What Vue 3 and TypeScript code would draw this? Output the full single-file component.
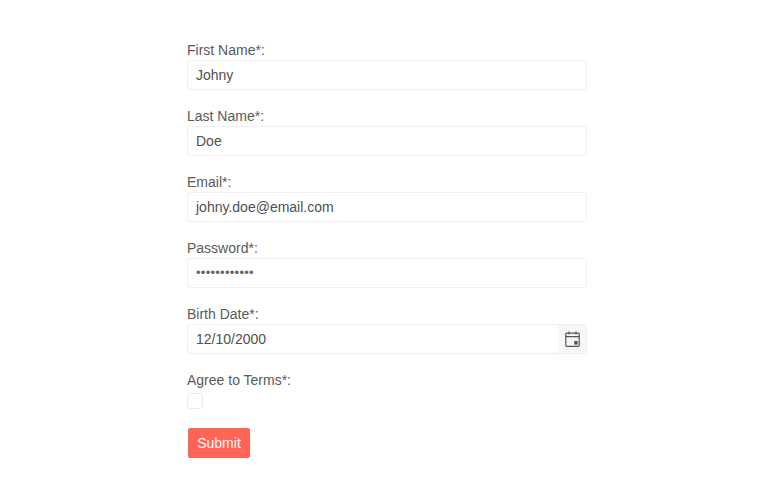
<script setup lang="ts">
const textFields = [
  { label: 'First Name*:', value: 'Johny' },
  { label: 'Last Name*:', value: 'Doe' },
  { label: 'Email*:', value: 'johny.doe@email.com' },
]
</script>

<template>
  <main class="page">
    <form class="form" @submit.prevent>
      <div v-for="f in textFields" :key="f.label" class="field">
        <label class="label">{{ f.label }}</label>
        <div class="input">{{ f.value }}</div>
      </div>
      <div class="field">
        <label class="label">Password*:</label>
        <div class="input dots">••••••••••••</div>
      </div>
      <div class="field">
        <label class="label">Birth Date*:</label>
        <div class="input date">
          <span>12/10/2000</span>
          <span class="cal">
            <svg width="15" height="16" viewBox="0 0 15 16" fill="none" stroke="#555" stroke-width="1.2">
              <rect x=".8" y="2.1" width="13.4" height="13.2" rx="1" />
              <path d="M.8 5.6h13.4M4 .5v3M11 .5v3" />
              <rect x="9.2" y="10" width="3.4" height="3.6" fill="#555" stroke="none" />
            </svg>
          </span>
        </div>
      </div>
      <div class="field terms">
        <label class="label">Agree to Terms*:</label>
        <span class="check"></span>
      </div>
      <button type="button" class="submit">Submit</button>
    </form>
  </main>
</template>

<style scoped>
.page {
  width: 770px;
  height: 504px;
  display: flex;
  justify-content: center;
  background: #fff;
  font-family: "Liberation Sans", Arial, sans-serif;
  color: #5a5a5a;
}
.form {
  width: 400px;
  padding-top: 42px;
  margin-left: 4px;
  display: flex;
  flex-direction: column;
  align-items: flex-start;
}
.field {
  width: 100%;
  display: flex;
  flex-direction: column;
  margin-bottom: 18px;
}
.label {
  font-size: 14px;
  line-height: 17px;
  margin-bottom: 1px;
}
.input {
  box-sizing: border-box;
  height: 30px;
  border: 1px solid #efefef;
  border-radius: 3px;
  padding: 0 8px;
  font-size: 14px;
  line-height: 28px;
  color: #505050;
}
.dots {
  font-size: 13px;
  letter-spacing: 0.27px;
  color: #666;
}
.date {
  display: flex;
  justify-content: space-between;
  padding-right: 0;
}
.cal {
  width: 28px;
  height: 28px;
  background: #f7f7f7;
  display: flex;
  align-items: center;
  justify-content: center;
}
.terms {
  margin-bottom: 19px;
}
.check {
  box-sizing: border-box;
  width: 16px;
  height: 16px;
  margin-top: 3px;
  border: 1px solid #ececec;
  border-radius: 3px;
}
.submit {
  width: 62px;
  height: 30px;
  margin-left: 1px;
  border: 0;
  border-radius: 2px;
  background: #ff6455;
  color: #fff;
  font: 14px "Liberation Sans", Arial, sans-serif;
  padding: 0;
}
</style>
